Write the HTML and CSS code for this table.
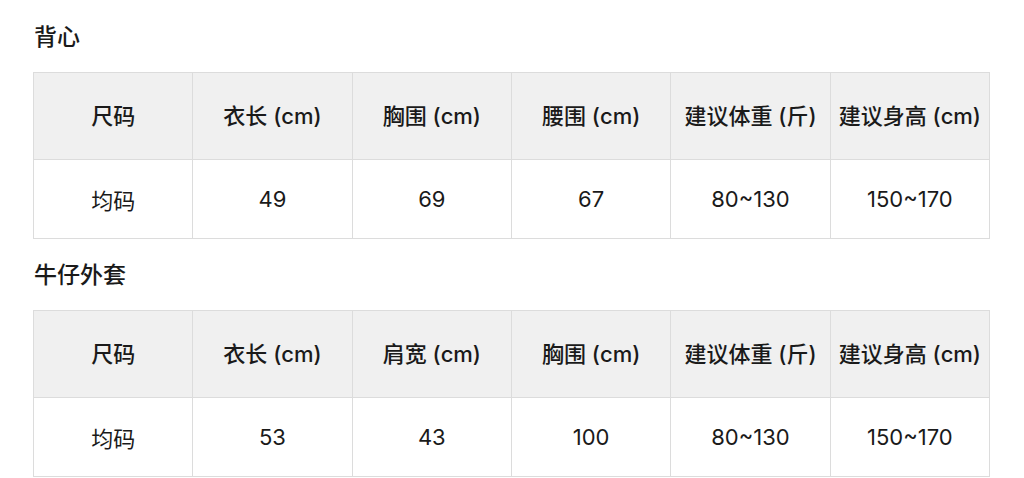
FILE: index.html
```html
<!DOCTYPE html>
<html lang="zh-CN">
<head>
<meta charset="utf-8">
<link rel="stylesheet" href="styles.css">
</head>
<body>
<div class="page">
  <h2 class="title">背心</h2>
  <table class="size-table">
    <thead>
      <tr><th>尺码</th><th>衣长 (cm)</th><th>胸围 (cm)</th><th>腰围 (cm)</th><th>建议体重 (斤)</th><th>建议身高 (cm)</th></tr>
    </thead>
    <tbody>
      <tr><td>均码</td><td>49</td><td>69</td><td>67</td><td>80~130</td><td>150~170</td></tr>
    </tbody>
  </table>
  <h2 class="title">牛仔外套</h2>
  <table class="size-table">
    <thead>
      <tr><th>尺码</th><th>衣长 (cm)</th><th>肩宽 (cm)</th><th>胸围 (cm)</th><th>建议体重 (斤)</th><th>建议身高 (cm)</th></tr>
    </thead>
    <tbody>
      <tr><td>均码</td><td>53</td><td>43</td><td>100</td><td>80~130</td><td>150~170</td></tr>
    </tbody>
  </table>
</div>
</body>
</html>
```
FILE: styles.css
```css
html, body {
  margin: 0;
  padding: 0;
  background: #ffffff;
}
body {
  font-family: "Inter", "Noto Sans CJK SC", sans-serif;
  color: #1a1a1a;
}
.page {
  padding: 20px 34px 0 33px;
}
.title {
  margin: 0 0 22px 1px;
  font-size: 23px;
  line-height: 30px;
  font-weight: 500;
  font-family: "Noto Sans CJK SC", sans-serif;
}
.size-table + .title {
  margin-top: 19px;
}
.size-table {
  width: 100%;
  border-collapse: collapse;
  table-layout: fixed;
}
.size-table th,
.size-table td {
  border: 1px solid #dcdcdc;
  text-align: center;
  font-size: 22px;
  padding: 0;
}
.size-table th {
  background: #f0f0f0;
  font-weight: 500;
  padding-bottom: 4px;
}
.size-table thead tr {
  height: 87px;
}
.size-table tbody tr {
  height: 79px;
}
.size-table td {
  font-weight: 400;
}
```
